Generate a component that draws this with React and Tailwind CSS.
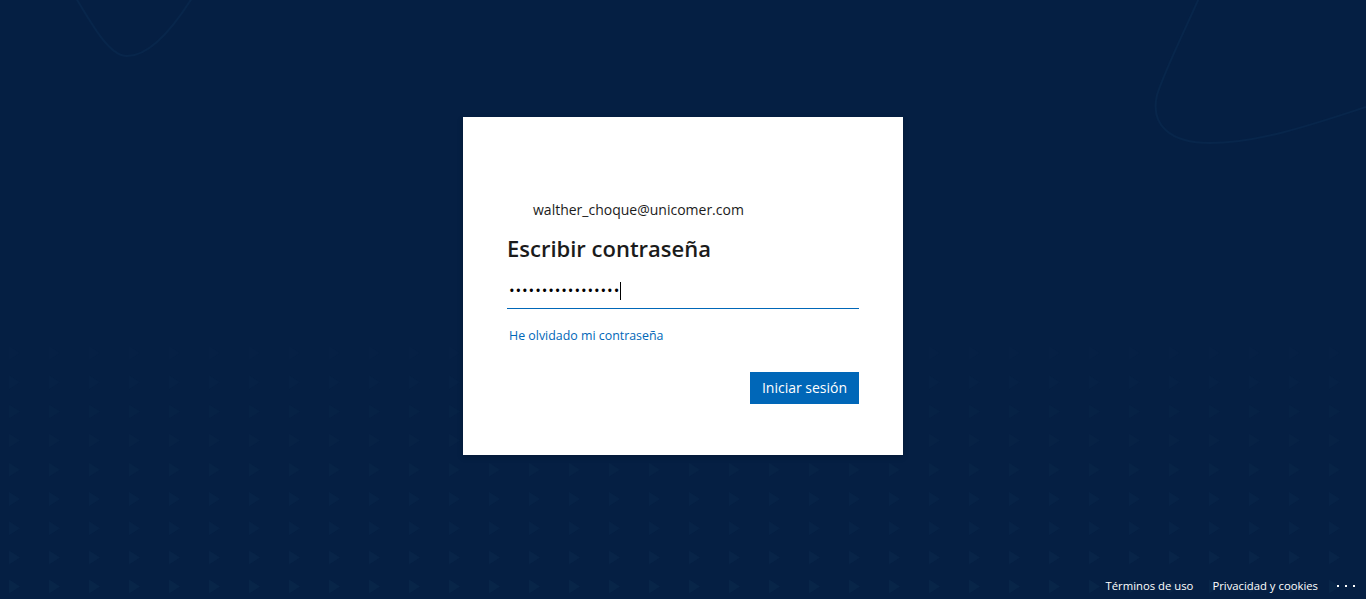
import React from "react";

function Background() {
  const tris = [];
  for (let j = 0; j < 9; j++) {
    const y = 353 + j * 29.2;
    const op = 0.3 + j * 0.07;
    for (let i = 0; i < 35; i++) {
      const x = 14 + i * 40;
      tris.push(
        <path
          key={`${i}-${j}`}
          d={`M${x - 5} ${y - 7} L${x + 6} ${y} L${x - 5} ${y + 7} Z`}
          fill="#092649"
          opacity={Math.min(op, 1)}
        />
      );
    }
  }
  return (
    <svg className="absolute inset-0" width="1366" height="599" viewBox="0 0 1366 599">
      <g>{tris}</g>
      <path
        d="M76 -2 C95 30 110 55 126 56 C150 57 175 25 192 -2"
        fill="none"
        stroke="#08264b"
        strokeWidth="2"
      />
      <path
        d="M1199 -2 C1185 30 1165 70 1157 95 C1150 125 1170 143 1210 143 C1260 143 1320 122 1366 107"
        fill="none"
        stroke="#08264b"
        strokeWidth="2"
      />
    </svg>
  );
}

export default function App() {
  const font = { fontFamily: '"Open Sans", "Noto Sans", sans-serif' };
  return (
    <div
      className="relative w-[1366px] h-[599px] overflow-hidden bg-[#051f43] flex flex-col items-center"
      style={font}
    >
      <Background />
      <div className="relative mt-[117px] w-[440px] h-[338px] bg-white px-[44px] pt-[81px] shadow-[0_2px_6px_rgba(0,0,0,0.2)]">
        <div className="pl-[26px] text-[14px] leading-[24px] text-[#1b1b1b]">
          walther_choque@unicomer.com
        </div>
        <h1 className="mt-[12px] text-[22px] leading-[28px] font-semibold text-[#1b1b1b]">
          Escribir contraseña
        </h1>
        <div className="mt-[11px] h-[36px] border-b border-solid border-b-[#0067b8] flex items-center pl-[2px] pr-[2px]">
          <span className="text-[15px] tracking-[0.9px] text-black leading-none">
            •••••••••••••••••
          </span>
          <span className="w-px h-[18px] bg-black" />
        </div>
        <div className="mt-[17px] pl-[2px] text-[12.4px] leading-[20px] text-[#0067b8]">
          He olvidado mi contraseña
        </div>
        <div className="mt-[26px] flex justify-end">
          <button className="w-[109px] h-[32px] bg-[#0067b8] text-white text-[14px] leading-[32px]">
            Iniciar sesión
          </button>
        </div>
      </div>
      <div className="relative mt-auto self-stretch flex justify-end items-center h-[27px] pr-[11px] text-white text-[11.3px] leading-[16px]">
        <span className="mr-[19px]">Términos de uso</span>
        <span className="mr-[19px]">Privacidad y cookies</span>
        <span className="flex gap-[6px] items-center">
          <span className="w-[2px] h-[2px] bg-white" />
          <span className="w-[2px] h-[2px] bg-white" />
          <span className="w-[2px] h-[2px] bg-white" />
        </span>
      </div>
    </div>
  );
}
